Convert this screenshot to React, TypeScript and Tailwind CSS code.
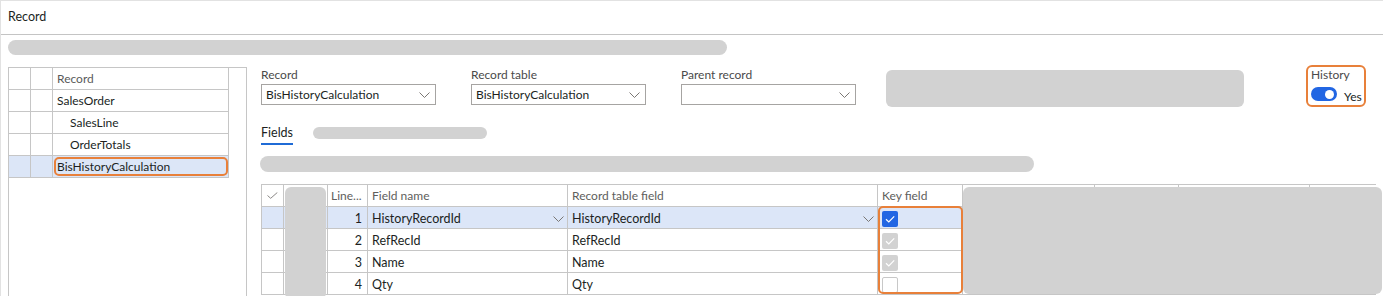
import React from "react";

const line = "border-[#c6c6c6]";

function Chevron() {
  return (
    <svg width="11" height="6" viewBox="0 0 11 6" className="shrink-0">
      <path d="M0.5 0.5 L5.5 5.5 L10.5 0.5" stroke="#7a7774" strokeWidth="1" fill="none" />
    </svg>
  );
}

function Check({ color }: { color: string }) {
  return (
    <svg width="16" height="16" viewBox="0 0 16 16">
      <path d="M4 8.3 L6.8 11 L12.2 5.4" stroke={color} strokeWidth="1.2" fill="none" />
    </svg>
  );
}

function Select({ label, value }: { label: string; value: string }) {
  return (
    <div className="w-[175px] pt-[2px]">
      <div className="h-[16px] text-[12px] leading-[16px] text-[#4a4a4a]">{label}</div>
      <div className="mt-[1px] flex h-[21px] items-center justify-between border border-[#a6a4a2] pl-[4px] pr-[5px] text-[12px] text-[#201f1e]">
        <span>{value}</span>
        <Chevron />
      </div>
    </div>
  );
}

const treeRows = [
  { text: "Record", indent: false, head: true },
  { text: "SalesOrder", indent: false },
  { text: "SalesLine", indent: true },
  { text: "OrderTotals", indent: true },
  { text: "BisHistoryCalculation", indent: false, selected: true },
];

const gridRows = [
  { n: 1, name: "HistoryRecordId", table: "HistoryRecordId", key: "on", selected: true },
  { n: 2, name: "RefRecId", table: "RefRecId", key: "dim" },
  { n: 3, name: "Name", table: "Name", key: "dim" },
  { n: 4, name: "Qty", table: "Qty", key: "off" },
];

function KeyBox({ state }: { state: string }) {
  if (state === "on")
    return (
      <div className="h-[16px] w-[16px] rounded-[2px] bg-[#2266e3]">
        <Check color="#ffffff" />
      </div>
    );
  if (state === "dim")
    return (
      <div className="h-[16px] w-[16px] rounded-[2px] bg-[#d2d2d2]">
        <Check color="#ffffff" />
      </div>
    );
  return <div className="h-[16px] w-[16px] rounded-[2px] border border-[#c8c8c8] bg-white" />;
}

export default function App() {
  return (
    <div className="h-[296px] w-[1383px] overflow-hidden border-l border-t border-[#e2e2e2] bg-white font-['Segoe_UI',Lato,sans-serif] text-[#201f1e]">
      <div className="flex h-[34px] items-center border-b border-[#c4c4c4] pl-[7px] text-[12.5px] text-[#201f1e]">
        Record
      </div>

      <div className="px-[7px] pt-[5px]">
        <div className="h-[15px] w-[719px] rounded-full bg-[#d2d2d2]" />

        <div className="mt-[12px] flex">
          {/* tree */}
          <div className={`h-[240px] w-[239px] border-l border-r border-t ${line}`}>
            {treeRows.map((r) => (
              <div
                key={r.text}
                className={`flex h-[22px] w-[220px] border-b ${line} ${r.selected ? "bg-[#dce6f7]" : ""}`}
              >
                <div className={`w-[22px] border-r ${line}`} />
                <div className={`w-[22px] border-r ${line}`} />
                <div className={`w-[176px] border-r ${line} text-[12px]`}>
                  {r.selected ? (
                    <div className="h-full p-[1px] pr-0">
                      <div className="flex h-full items-center rounded-[5px] border-2 border-[#e8803a] pl-[1px]">
                        {r.text}
                      </div>
                    </div>
                  ) : (
                    <div
                      className={`flex h-full items-center ${r.indent ? "pl-[17px]" : "pl-[4px]"} ${r.head ? "text-[#5a5a5a]" : ""}`}
                    >
                      {r.text}
                    </div>
                  )}
                </div>
              </div>
            ))}
          </div>

          {/* right side */}
          <div className="-mt-[2px] ml-[14px] flex-1">
            <div className="flex h-[42px] items-start">
              <Select label="Record" value="BisHistoryCalculation" />
              <div className="ml-[35px]">
                <Select label="Record table" value="BisHistoryCalculation" />
              </div>
              <div className="ml-[35px]">
                <Select label="Parent record" value="" />
              </div>
              <div className="ml-[30px] mt-[5px] h-[37px] w-[358px] rounded-[6px] bg-[#d2d2d2]" />
              <div className="ml-[62px] h-[42px] w-[60px] rounded-[6px] border-2 border-[#e8803a] pl-[3px] pt-[1px]">
                <div className="text-[12px] leading-[14px] text-[#4a4a4a]">History</div>
                <div className="mt-[5px] flex items-end gap-[7px]">
                  <div className="flex h-[14px] w-[26px] items-center justify-end rounded-full bg-[#2266e3] pr-[3px]">
                    <div className="h-[9px] w-[9px] rounded-full bg-white" />
                  </div>
                  <span className="-mb-[3px] text-[12px] leading-[14px]">Yes</span>
                </div>
              </div>
            </div>

            {/* tabs */}
            <div className="mt-[15px] flex items-start">
              <div className="pt-[3px]">
                <div className="text-[12.5px] leading-[16px] text-[#201f1e]">Fields</div>
                <div className="mt-[2px] h-[2px] bg-[#1f6bd6]" />
              </div>
              <div className="ml-[20px] mt-[5px] h-[12px] w-[174px] rounded-full bg-[#d2d2d2]" />
            </div>

            <div className="-ml-[1px] mt-[11px] h-[16px] w-[774px] rounded-full bg-[#d2d2d2]" />

            {/* grid */}
            <div className={`relative mt-[12px] border-l border-t ${line}`}>
              <div className={`flex h-[22px] border-b ${line} text-[12px] text-[#605e5c]`}>
                <div className={`flex w-[22px] items-center justify-center border-r ${line}`}>
                  <svg width="11" height="7" viewBox="0 0 11 7">
                    <path d="M0.5 3.5 L3.7 6.3 L10.3 0.5" stroke="#8a8886" strokeWidth="1" fill="none" />
                  </svg>
                </div>
                <div className={`w-[44px] border-r ${line}`} />
                <div className={`flex w-[40px] items-center border-r ${line} pl-[3px]`}>Line...</div>
                <div className={`flex w-[200px] items-center border-r ${line} pl-[4px]`}>Field name</div>
                <div className={`flex w-[310px] items-center border-r ${line} pl-[4px]`}>Record table field</div>
                <div className={`flex w-[85px] items-center border-r ${line} pl-[4px]`}>Key field</div>
                <div className={`w-[132px] border-r ${line}`} />
                <div className={`w-[84px] border-r ${line}`} />
                <div className={`w-[131px] border-r ${line}`} />
                <div className="flex-1" />
              </div>
              {gridRows.map((r) => (
                <div
                  key={r.n}
                  className={`flex h-[22px] border-b ${line} text-[12.5px] ${r.selected ? "bg-[#dce6f8]" : ""}`}
                >
                  <div className={`w-[22px] border-r ${line}`} />
                  <div className={`w-[44px] border-r ${line}`} />
                  <div className={`flex w-[40px] items-center justify-end border-r ${line} pr-[5px] pt-[3px]`}>{r.n}</div>
                  <div className={`flex w-[200px] items-center justify-between border-r ${line} pl-[4px] pr-[3px] pt-[3px]`}>
                    <span>{r.name}</span>
                    {r.selected && <Chevron />}
                  </div>
                  <div className={`flex w-[310px] items-center justify-between border-r ${line} pl-[4px] pr-[3px] pt-[3px]`}>
                    <span>{r.table}</span>
                    {r.selected && <Chevron />}
                  </div>
                  <div className={`flex w-[85px] items-center border-r ${line} pl-[4px] pt-[3px]`}>
                    <KeyBox state={r.key} />
                  </div>
                  <div className={`w-[132px] border-r ${line}`} />
                  <div className={`w-[84px] border-r ${line}`} />
                  <div className={`w-[131px] border-r ${line}`} />
                  <div className="flex-1" />
                </div>
              ))}

              {/* redaction blocks and highlight */}
              <div className="absolute left-[23px] top-[2px] h-[112px] w-[41px] rounded-[6px] bg-[#d2d2d2]" />
              <div className="absolute left-[701px] top-[2px] h-[107px] w-[419px] rounded-[6px] bg-[#d2d2d2]" />
              <div className="absolute left-[616px] top-[21px] h-[88px] w-[85px] rounded-[5px] border-2 border-[#e8803a]" />
            </div>
          </div>
        </div>
      </div>
    </div>
  );
}
